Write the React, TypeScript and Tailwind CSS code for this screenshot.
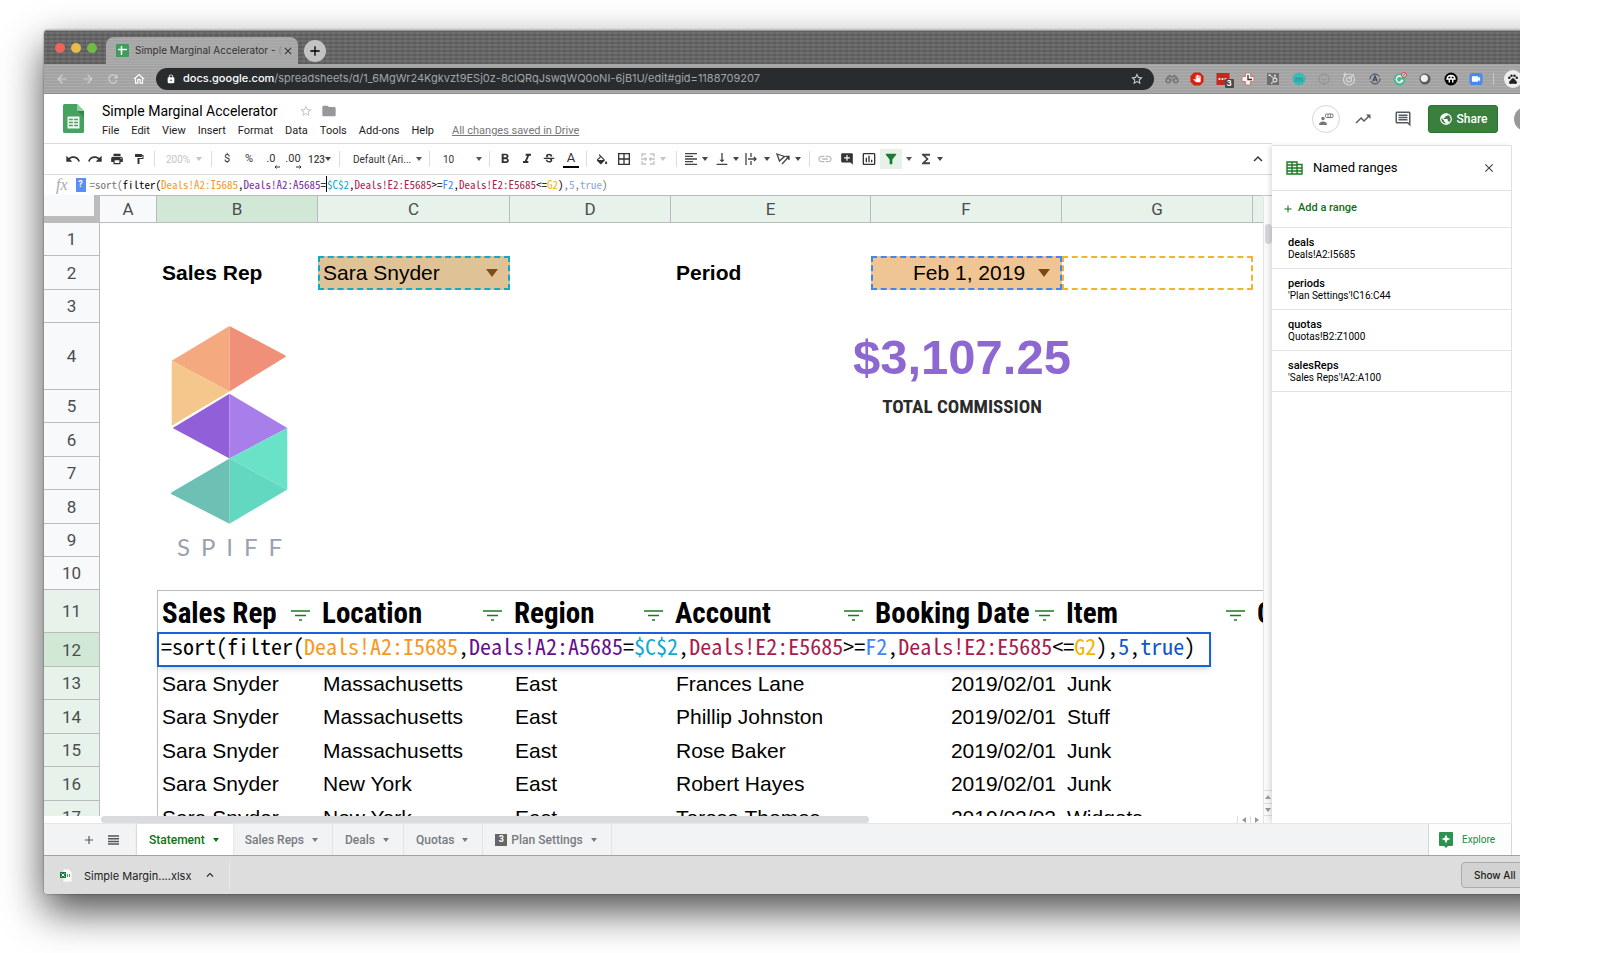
import React, {useState} from "react";
import {
    MdAddComment, MdArrowDropDown, MdBorderAll, MdFilterAlt, MdFolder, MdFormatAlignLeft, MdFormatBold,
    MdFormatItalic, MdFormatPaint, MdFunctions, MdInsertChartOutlined, MdOutlineInsertComment, MdLink,
    MdLock, MdOutlineHome, MdPrint, MdPublic, MdRedo, MdStarBorder, MdStrikethroughS, MdTrendingUp, MdUndo,
    MdVerticalAlignBottom, MdArrowBack, MdArrowForward, MdRefresh, MdClose, MdAdd, MdKeyboardArrowUp, MdPanTool,
    MdVideocam, MdPets,
} from "react-icons/md";
import {FaHubspot} from "react-icons/fa";

const MENU = ["File", "Edit", "View", "Insert", "Format", "Data", "Tools", "Add-ons", "Help"];

const FORMULA = [
    {text: "=sort(", cell: "text-black", bar: "text-[#777]"},
    {text: "filter(", cell: "text-black", bar: "text-black"},
    {text: "Deals!A2:I5685", cell: "text-[#f7981d]", bar: "text-[#f7981d]"},
    {text: ",", cell: "text-black", bar: "text-black"},
    {text: "Deals!A2:A5685", cell: "text-[#65108a]", bar: "text-[#7b2a9c]"},
    {text: "=", cell: "text-black", bar: "text-black border-r border-black"},
    {text: "$C$2", cell: "text-[#11a9cc]", bar: "text-[#11a9cc]"},
    {text: ",", cell: "text-black", bar: "text-black"},
    {text: "Deals!E2:E5685", cell: "text-[#a61d4c]", bar: "text-[#a61d4c]"},
    {text: ">=", cell: "text-black", bar: "text-black"},
    {text: "F2", cell: "text-[#4285f4]", bar: "text-[#4285f4]"},
    {text: ",", cell: "text-black", bar: "text-black"},
    {text: "Deals!E2:E5685", cell: "text-[#a61d4c]", bar: "text-[#a61d4c]"},
    {text: "<=", cell: "text-black", bar: "text-black"},
    {text: "G2", cell: "text-[#f4b400]", bar: "text-[#f4b400]"},
    {text: ")", cell: "text-black", bar: "text-black"},
    {text: ",", cell: "text-black", bar: "text-[#777]"},
    {text: "5", cell: "text-[#1155cc]", bar: "text-[#8ca6e0]"},
    {text: ",", cell: "text-black", bar: "text-[#777]"},
    {text: "true", cell: "text-[#1155cc]", bar: "text-[#8ca6e0]"},
    {text: ")", cell: "text-black", bar: "text-[#777]"},
];

const HEADERS = ["Sales Rep", "Location", "Region", "Account", "Booking Date", "Item"];

const DEALS = [
    {row: 13, height: "h-[33px]", rep: "Sara Snyder", location: "Massachusetts", region: "East", account: "Frances Lane", date: "2019/02/01", item: "Junk"},
    {row: 14, height: "h-[34px]", rep: "Sara Snyder", location: "Massachusetts", region: "East", account: "Phillip Johnston", date: "2019/02/01", item: "Stuff"},
    {row: 15, height: "h-[33px]", rep: "Sara Snyder", location: "Massachusetts", region: "East", account: "Rose Baker", date: "2019/02/01", item: "Junk"},
    {row: 16, height: "h-[34px]", rep: "Sara Snyder", location: "New York", region: "East", account: "Robert Hayes", date: "2019/02/01", item: "Junk"},
    {row: 17, height: "h-[33px]", rep: "Sara Snyder", location: "New York", region: "East", account: "Teresa Thomas", date: "2019/02/02", item: "Widgets"},
];

const RANGES = [
    {name: "deals", range: "Deals!A2:I5685"},
    {name: "periods", range: "'Plan Settings'!C16:C44"},
    {name: "quotas", range: "Quotas!B2:Z1000"},
    {name: "salesReps", range: "'Sales Reps'!A2:A100"},
];

const TABS = ["Statement", "Sales Reps", "Deals", "Quotas", "Plan Settings"];

const Caret: React.FC<{className?: string}> = ({className = "text-[#555]"}) => (
    <svg viewBox="0 0 6 4" className={`h-1 w-1.5 shrink-0 ${className}`}>
        <path d="M0 0h6L3 4z" fill="currentColor"/>
    </svg>
);

const Divider = () => <span className="mx-1 h-4 w-px shrink-0 bg-[#ddd]"/>;

interface ToolProps {
    label: string;
    className?: string;
    children: React.ReactNode;
}

const Tool: React.FC<ToolProps> = ({label, className = "w-[22px]", children}) => (
    <button aria-label={label} className={`flex h-5 shrink-0 items-center justify-center ${className}`}>
        {children}
    </button>
);

const DropTool: React.FC<ToolProps> = ({label, className = "text-[#444]", children}) => (
    <button aria-label={label} className={`flex h-5 w-[31px] shrink-0 items-center justify-between pr-1 pl-0.5 ${className}`}>
        {children}
        <Caret className={className}/>
    </button>
);

const TabStrip = () => (
    <div className="flex h-[34px] shrink-0 items-end bg-[#696969] bg-[repeating-linear-gradient(0deg,#0000001f_0_2px,transparent_2px_4px),repeating-linear-gradient(90deg,#ffffff0c_0_3px,transparent_3px_6px)] pl-[11px] shadow-[inset_0_1px_0_#999]">
        <div className="flex h-8 items-center gap-1.5">
            <span className="size-2.5 rounded-full bg-[#f0635a]"/>
            <span className="size-2.5 rounded-full bg-[#e4bd4b]"/>
            <span className="size-2.5 rounded-full bg-[#70bb46]"/>
        </div>
        <div className="ml-[9px] flex h-[27px] w-[192px] items-center rounded-t-lg bg-[#a6a6a6] bg-[repeating-linear-gradient(0deg,#ffffff12_0_1px,transparent_1px_3px)] pr-[7px] pl-2.5">
            <svg viewBox="0 0 13 13" className="size-[13px] shrink-0">
                <rect width="13" height="13" rx="1" fill="#3f9c5a"/>
                <path d="M2 5.5h9M5.5 2v9" stroke="#fff" strokeWidth="1.5"/>
            </svg>
            <span className="ml-1.5 flex-1 whitespace-nowrap text-[10px] text-[#333]">
                Simple Marginal Accelerator - <span className="text-[#8c8c8c]">(</span>
            </span>
            <button aria-label="Close tab"><MdClose className="size-3 text-[#333]"/></button>
        </div>
        <button aria-label="New tab" className="mb-0.5 ml-1.5 flex size-[22px] items-center justify-center rounded-full bg-[#c3c3c3]">
            <MdAdd className="size-4 text-black"/>
        </button>
    </div>
);

const Extensions = () => (
    <div className="ml-2.5 flex w-[358px] shrink-0 items-center justify-between">
        <svg viewBox="0 0 16 16" className="size-4" fill="none" stroke="#777" strokeWidth="1.6">
            <circle cx="4.2" cy="9.500" r="2.1"/><circle cx="11.8" cy="9.500" r="2.1"/>
            <path d="M6.4 9h3.2M3 7l2.500-2.500L7.500 6h1l2-1.500L13 7"/>
        </svg>
        <svg viewBox="0 0 16 16" className="size-4">
            <path d="M5 1.5h6L14.5 5v6L11 14.5H5L1.5 11V5z" fill="#d8200f"/>
            <MdPanTool x="4" y="3.5" size="8" color="#fff"/>
        </svg>
        <span className="relative size-4">
            <svg viewBox="0 0 16 16" className="size-4">
                <path d="M1.500 2h13v12h-13z" fill="#c5281f"/>
                <circle cx="4.500" cy="8" r="1.100" fill="#fff"/><circle cx="7.500" cy="8" r="1.100" fill="#fff"/><circle cx="10.500" cy="8" r="1.100" fill="#fff"/>
            </svg>
            <span className="absolute top-2 left-2.5 flex size-[9px] items-center justify-center rounded-[1px] bg-[#4a4a4a] text-[8px] leading-none font-bold text-white">3</span>
        </span>
        <svg viewBox="0 0 16 16" className="size-4">
            <path d="M5.5 2h5v3.5H14v5h-3.500V14h-5v-3.500H2v-5h3.500z" fill="#f4f4f4" stroke="#d87878"/>
            <path d="M8 4v4.500h4" stroke="#333" strokeWidth="1.300" fill="none"/>
        </svg>
        <svg viewBox="0 0 16 16" className="size-4">
            <path d="M2 2h12v12H2z" fill="#6e6e6e"/>
            <FaHubspot x="3" y="3" size="10" color="#e4e4e4"/>
        </svg>
        <svg viewBox="0 0 16 16" className="size-4">
            <circle cx="8" cy="8" r="6.500" fill="#3fb7b4"/>
            <path d="M5 11V6.500M5 8q1.500-2.500 3 0v3M8 8q1.500-2.500 3 0v3" stroke="#1d8f96" fill="none"/>
        </svg>
        <svg viewBox="0 0 16 16" className="size-4" fill="none" stroke="#8f8f8f">
            <circle cx="8" cy="8" r="5"/><path d="M5.500 7.500L8 9.500l2.500-2"/>
        </svg>
        <svg viewBox="0 0 16 16" className="size-4" fill="none" stroke="#d6d6d6" strokeWidth="1.200">
            <circle cx="8" cy="8.500" r="5.500"/><circle cx="8" cy="8.500" r="2.500"/><path d="M2 3.500h4M4 1.500v4M8 8l5-5"/>
        </svg>
        <svg viewBox="0 0 16 16" className="size-4" fill="none" stroke="#39465e">
            <circle cx="8" cy="8" r="5" strokeDasharray="13 2"/><path d="M5.800 10.500L8 5l2.200 5.500M6.700 9h2.600" strokeWidth="1.200"/>
        </svg>
        <svg viewBox="0 0 16 16" className="size-4" fill="none">
            <circle cx="7.500" cy="8.500" r="6" fill="#44bd92"/>
            <path d="M10 6.200A3.200 3.200 0 1 0 10.500 9.500H8.500" stroke="#fff" strokeWidth="1.400"/>
            <circle cx="12" cy="4" r="2.600" fill="#c9c9c9" stroke="#d8505c"/><path d="M10.200 5.800l3.600-3.600" stroke="#d8505c"/>
        </svg>
        <svg viewBox="0 0 16 16" className="size-4">
            <circle cx="8" cy="8" r="5.500" fill="#5a5a5a"/><circle cx="7.300" cy="7.300" r="3.600" fill="#f2f2f2"/>
        </svg>
        <svg viewBox="0 0 16 16" className="size-4">
            <circle cx="8" cy="8" r="6.500" fill="#000"/>
            <path d="M4 8q.5-3.500 4-3.500T12 8zM6.300 8v3.500M9.700 8v3.500M8 4.500V8" stroke="#fff" strokeWidth="1.400" fill="none"/>
        </svg>
        <svg viewBox="0 0 16 16" className="size-4">
            <rect x="1.500" y="2" width="13" height="12" rx="3" fill="#4a85f0"/>
            <MdVideocam x="2.500" y="2.500" size="11" color="#fff"/>
        </svg>
        <span className="h-3 w-px bg-[#c8c8c8]"/>
        <span className="flex size-[18px] items-center justify-center rounded-full bg-[#eee]">
            <MdPets className="size-3 text-[#222]"/>
        </span>
    </div>
);

const AddressBar = () => (
    <div className="flex h-[30px] shrink-0 items-center border-b border-[#8b8b8b] bg-[#a3a3a3] bg-[repeating-linear-gradient(0deg,#ffffff1a_0_1px,transparent_1px_3px)] pr-[46px] pl-[11px]">
        <div className="flex w-[101px] items-center justify-between pr-2.5 text-[#cfcfcf]">
            <button aria-label="Back"><MdArrowBack className="size-3.5"/></button>
            <button aria-label="Forward"><MdArrowForward className="size-3.5"/></button>
            <button aria-label="Reload"><MdRefresh className="size-3.5"/></button>
            <button aria-label="Home"><MdOutlineHome className="size-3.5 text-white"/></button>
        </div>
        <div className="flex h-[22px] min-w-0 flex-1 items-center rounded-full bg-[#292c2f] px-2.5">
            <MdLock className="size-2.5 shrink-0 text-white"/>
            <a href="#sheet" className="ml-[7px] flex-1 truncate text-[11px] text-[#a2a4a7]">
                <span className="font-medium text-white">docs.google.com</span>/spreadsheets/d/1_6MgWr24Kgkvzt9ESj0z-8clQRqJswqWQ0oNI-6jB1U/edit#gid=1188709207
            </a>
            <button aria-label="Bookmark"><MdStarBorder className="size-3.5 text-[#d8d8d8]"/></button>
        </div>
        <Extensions/>
    </div>
);

const DocHeader = () => (
    <header className="flex h-[49px] shrink-0 items-center pr-[30px] pl-[19px]">
        <svg viewBox="0 0 21 29" className="h-[29px] w-[21px] shrink-0">
            <path d="M1.500 0H14l7 7v20.500a1.500 1.500 0 0 1-1.500 1.500h-18A1.500 1.500 0 0 1 0 27.500v-26A1.500 1.500 0 0 1 1.500 0z" fill="#45a25f"/>
            <path d="M14 0l7 7h-7z" fill="#8fd0a5"/>
            <path d="M14 7h7v6z" fill="#37864e"/>
            <path d="M4.500 12.500h12v12h-12z" fill="#f4f8f5"/>
            <path d="M6 15.500h9M6 18.500h9M6 21.500h9" stroke="#45a25f" strokeWidth="1.600"/>
            <path d="M10.500 13v11" stroke="#f4f8f5" strokeWidth="1.200"/>
        </svg>
        <div className="mt-[5px] ml-[18px]">
            <div className="flex h-5 items-center">
                <h1 className="text-[14px] leading-5 text-black">Simple Marginal Accelerator</h1>
                <button aria-label="Star" className="ml-[22px]"><MdStarBorder className="size-3.5 text-[#c6c6c6]"/></button>
                <button aria-label="Move to folder" className="ml-2"><MdFolder className="size-4 text-[#97979c]"/></button>
            </div>
            <nav className="flex h-5 items-center gap-3 text-[11px] text-[#1c1c1c]">
                {MENU.map(item => <button key={item}>{item}</button>)}
                <a href="#history" className="ml-1.5 text-[#777] underline">All changes saved in Drive</a>
            </nav>
        </div>
        <div className="ml-auto flex shrink-0 items-center">
            <button aria-label="Meet" className="flex size-7 items-center justify-center rounded-full border border-[#d5d7da]">
                <svg viewBox="0 0 16 14" className="h-3.5 w-4">
                    <circle cx="5" cy="6.500" r="1.700" fill="#777"/>
                    <path d="M1 13q0-3.500 4-3.500T9 13z" fill="#777"/>
                    <rect x="7.500" y="2" width="7.500" height="3.500" rx="1" fill="none" stroke="#777"/>
                    <path d="M10 2v3.500M12.500 2v3.500" stroke="#777" strokeWidth=".8"/>
                </svg>
            </button>
            <button aria-label="Activity" className="ml-3.5"><MdTrendingUp className="size-[18px] text-[#555a60]"/></button>
            <button aria-label="Comments" className="ml-[22px]"><MdOutlineInsertComment className="size-[18px] text-[#555a60]"/></button>
            <button className="ml-4 flex h-7 w-[70px] items-center justify-center gap-1 rounded-[3px] border border-[#2a7430] bg-[#3b7f3f] text-[12px] font-medium text-white">
                <MdPublic className="size-3.5"/>Share
            </button>
            <span className="ml-4 size-6 rounded-full bg-[#999]"/>
        </div>
    </header>
);

const Toolbar = () => (
    <div className="flex h-8 shrink-0 items-center border-y border-[#dcdcdc] pl-[18px] text-[11px] text-[#333]">
        <Tool label="Undo"><MdUndo className="size-4"/></Tool>
        <Tool label="Redo"><MdRedo className="size-4"/></Tool>
        <Tool label="Print"><MdPrint className="size-3.5"/></Tool>
        <Tool label="Paint format"><MdFormatPaint className="size-3"/></Tool>
        <Divider/>
        <label className="flex w-12 shrink-0 items-center justify-between pr-[5px] pl-[7px] text-[#c4c4c4]">
            <select aria-label="Zoom" className="w-7 appearance-none text-[10px] outline-none"><option>200%</option></select>
            <Caret className="text-[#c4c4c4]"/>
        </label>
        <Divider/>
        <Tool label="Currency">$</Tool>
        <Tool label="Percent">%</Tool>
        <Tool label="Decrease decimals" className="relative w-[22px]">
            .0<svg viewBox="0 0 6 4" className="absolute right-0.5 bottom-0 h-1 w-1.5"><path d="M6 2H1M2.500.5L1 2l1.500 1.500" stroke="#333" fill="none"/></svg>
        </Tool>
        <Tool label="Increase decimals" className="relative w-[22px]">
            .00<svg viewBox="0 0 6 4" className="absolute right-0.5 bottom-0 h-1 w-1.5"><path d="M0 2h5M3.500.5L5 2 3.500 3.500" stroke="#333" fill="none"/></svg>
        </Tool>
        <DropTool label="More formats"><span className="pl-0.5 text-[10px] font-medium">123</span></DropTool>
        <Divider/>
        <label className="flex w-[81px] shrink-0 items-center justify-between pr-[3px] pl-[9px]">
            <select aria-label="Font" className="w-[60px] appearance-none text-[10px] outline-none"><option>Default (Ari...</option></select>
            <Caret/>
        </label>
        <Divider/>
        <label className="flex w-[51px] shrink-0 items-center justify-between pr-[3px] pl-[9px]">
            <select aria-label="Font size" className="w-5 appearance-none text-[10px] outline-none"><option>10</option></select>
            <Caret/>
        </label>
        <Divider/>
        <Tool label="Bold"><MdFormatBold className="size-4"/></Tool>
        <Tool label="Italic"><MdFormatItalic className="size-4"/></Tool>
        <Tool label="Strikethrough"><MdStrikethroughS className="size-3.5"/></Tool>
        <Tool label="Text color">
            <span className="w-4 border-b-2 border-black text-center text-[13px] leading-4">A</span>
        </Tool>
        <Divider/>
        <Tool label="Fill color">
            <svg viewBox="0 0 24 18" className="h-[11px] w-3.5" fill="currentColor">
                <path d="M16.560 8.940L7.620 0 6.210 1.410l2.380 2.380-5.150 5.150c-.59.59-.59 1.540 0 2.120l5.500 5.500c.29.29.68.44 1.060.44s.77-.15 1.060-.44l5.500-5.500c.59-.58.59-1.530 0-2.120zM5.210 10L10 5.210 14.790 10H5.210zM19 11.500s-2 2.170-2 3.500c0 1.100.9 2 2 2s2-.9 2-2c0-1.330-2-3.500-2-3.500z"/>
            </svg>
        </Tool>
        <Tool label="Borders"><MdBorderAll className="size-4"/></Tool>
        <span className="mr-0.5 ml-1 flex">
            <DropTool label="Merge cells" className="text-[#c4c4c4]">
                <svg viewBox="0 0 14 12" className="h-3 w-3.5" fill="none" stroke="currentColor" strokeWidth="1.300">
                    <path d="M5 1H1v3M9 1h4v3M5 11H1V8M9 11h4V8M0 6h5.500M14 6H8.500M4 4.500L5.500 6 4 7.500M10 4.500L8.500 6 10 7.500"/>
                </svg>
            </DropTool>
        </span>
        <Divider/>
        <DropTool label="Horizontal align"><MdFormatAlignLeft className="size-4"/></DropTool>
        <DropTool label="Vertical align"><MdVerticalAlignBottom className="size-4"/></DropTool>
        <DropTool label="Text wrapping">
            <svg viewBox="0 0 12 12" className="size-3" fill="none" stroke="currentColor" strokeWidth="1.300">
                <path d="M1 0v12M6 0v4M6 8v4M3 6h8M9 4l2 2-2 2"/>
            </svg>
        </DropTool>
        <DropTool label="Text rotation">
            <svg viewBox="0 0 14 12" className="h-3 w-3.5" fill="none" stroke="currentColor" strokeWidth="1.300">
                <path d="M1 1l7.500 2.500-5 4.500zM6 11l6.500-7M9.500 3.500H13V7"/>
            </svg>
        </DropTool>
        <Divider/>
        <Tool label="Insert link"><MdLink className="size-4 text-[#b9b9b9]"/></Tool>
        <Tool label="Insert comment"><MdAddComment className="size-3.5"/></Tool>
        <Tool label="Insert chart"><MdInsertChartOutlined className="size-4"/></Tool>
        <Tool label="Filter" className="w-[22px] bg-[#e6f2e9]"><MdFilterAlt className="size-4 text-[#1a7a32]"/></Tool>
        <Tool label="Filter views" className="w-3.5"><Caret/></Tool>
        <DropTool label="Functions"><MdFunctions className="size-4"/></DropTool>
        <Tool label="Hide menus" className="mr-[3px] ml-auto w-[22px]"><MdKeyboardArrowUp className="size-[18px]"/></Tool>
    </div>
);

const FormulaBar = () => (
    <div className="flex h-5 shrink-0 items-center pl-3">
        <span className="font-['Liberation_Serif',serif] text-[16px] leading-5 text-[#aaa] italic">fx</span>
        <span className="ml-2 flex h-3.5 w-2.5 items-center justify-center bg-[#5a8df5] text-[9px] font-bold text-white">?</span>
        <div role="textbox" aria-label="Formula bar" className="ml-1 whitespace-nowrap pb-0.5 font-['Noto_Sans_Mono_CJK_JP','Liberation_Mono',monospace] text-[11px] leading-4">
            {FORMULA.map((part, index) => <span key={index} className={part.bar}>{part.text}</span>)}
        </div>
    </div>
);

const RowHead: React.FC<{row: number, tone?: string}> = ({row, tone = "bg-[#f8f9fa]"}) => (
    <th scope="row" className={`border-r border-b border-[#b9bbbd] p-0 text-center font-['Roboto',sans-serif] text-[17px] leading-5 font-normal text-[#4a4d50] ${tone}`}>
        {row}
    </th>
);

const FilterButton = () => (
    <button aria-label="Filter column" className="mt-1 shrink-0">
        <svg viewBox="0 0 19 11" className="h-[11px] w-[19px]" stroke="#1a7a1f" strokeWidth="1.300">
            <path d="M0 1h19M4 5.500h11M8 10h3"/>
        </svg>
    </button>
);

const SpiffLogo = () => (
    <div className="absolute top-0.5 left-3.5 w-[117px]">
        <svg viewBox="0 0 352 600" className="h-[200px] w-[117px]">
            <path d="M176 2L2 107l174 92z" fill="#f4a97f"/>
            <path d="M176 2l167 88q4 3 0 6L176 199z" fill="#f09078"/>
            <path d="M2 107l174 92L2 302z" fill="#f6c78c"/>
            <path d="M176 206L5 309l171 92z" fill="#9160d8"/>
            <path d="M176 206l174 103-174 92z" fill="#a87eeb"/>
            <path d="M350 309v185l-174-93z" fill="#69e2c8"/>
            <path d="M350 494L176 597V401z" fill="#63d8c0"/>
            <path d="M176 401v196L2 508q-4-3 0-6z" fill="#6cc1b4"/>
        </svg>
        <div className="mt-2 flex h-7 items-center justify-between px-1.5 font-['Lato',sans-serif] text-[24px] text-[#9aa1b0]">
            <span>S</span><span>P</span><span>I</span><span>F</span><span>F</span>
        </div>
    </div>
);

const Sheet = () => {
    const [rep, setRep] = useState("Sara Snyder");
    const [period, setPeriod] = useState("Feb 1, 2019");

    return (
        <div className="flex min-h-0 flex-1">
            <div className="flex min-w-0 flex-1 flex-col border-r border-[#e3e3e3]">
                <div className="min-h-0 flex-1 overflow-hidden">
                    <table className="w-[1366px] table-fixed border-separate border-spacing-0 font-['Liberation_Sans',Arial,sans-serif] text-[21px] leading-6 text-black">
                        <colgroup>
                            <col className="w-14"/>
                            <col className="w-[57px]"/>
                            <col className="w-[161px]"/>
                            <col className="w-[192px]"/>
                            <col className="w-[161px]"/>
                            <col className="w-[200px]"/>
                            <col className="w-[191px]"/>
                            <col className="w-[191px]"/>
                            <col/>
                        </colgroup>
                        <thead>
                            <tr className="h-7 font-['Roboto',sans-serif] text-[17px] text-[#4a4d50] [&>th]:border-t [&>th]:border-r [&>th]:border-b [&>th]:border-[#b9bbbd] [&>th]:p-0 [&>th]:font-normal">
                                <td className="border-r-[6px] border-b-[7px] border-[#bcbcbc] bg-[#f8f9fa] p-0"/>
                                <th className="bg-[#f8f9fa]">A</th>
                                <th className="bg-[#d1e8d7]">B</th>
                                <th className="bg-[#e7f2ea]">C</th>
                                <th className="bg-[#e7f2ea]">D</th>
                                <th className="bg-[#e7f2ea]">E</th>
                                <th className="bg-[#e7f2ea]">F</th>
                                <th className="bg-[#e7f2ea]">G</th>
                                <th className="bg-[#e7f2ea]"/>
                            </tr>
                        </thead>
                        <tbody className="[&_td]:p-0">
                            <tr className="h-[33px]"><RowHead row={1}/><td colSpan={8}/></tr>
                            <tr className="h-[34px]">
                                <RowHead row={2}/>
                                <td/>
                                <td><div className="pl-[5px] font-bold">Sales Rep</div></td>
                                <td>
                                    <label className="flex h-[34px] items-center border-2 border-dashed border-[#11a9cc] bg-[#dfc397] pr-2.5 pl-[3px]">
                                        <select aria-label="Sales rep" value={rep} onChange={e => setRep(e.target.value)} className="flex-1 appearance-none outline-none">
                                            <option>Sara Snyder</option>
                                        </select>
                                        <Caret className="h-2! w-3! text-[#7a4f1a]"/>
                                    </label>
                                </td>
                                <td/>
                                <td><div className="pl-[5px] font-bold">Period</div></td>
                                <td>
                                    <label className="flex h-[34px] items-center border-2 border-dashed border-[#4285f4] bg-[#f0c594] pr-2.5 pl-10">
                                        <select aria-label="Period" value={period} onChange={e => setPeriod(e.target.value)} className="flex-1 appearance-none outline-none">
                                            <option>Feb 1, 2019</option>
                                        </select>
                                        <Caret className="h-2! w-3! text-[#7a4710]"/>
                                    </label>
                                </td>
                                <td><div className="h-[34px] border-2 border-dashed border-[#f4b42a]"/></td>
                                <td/>
                            </tr>
                            <tr className="h-[33px]"><RowHead row={3}/><td colSpan={8}/></tr>
                            <tr className="h-[67px]">
                                <RowHead row={4}/>
                                <td/>
                                <td className="relative align-top"><SpiffLogo/></td>
                                <td colSpan={2}/>
                                <td colSpan={3} className="text-center text-[49px] leading-[60px] font-bold text-[#8d68d0]">$3,107.25</td>
                                <td/>
                            </tr>
                            <tr className="h-[33px]">
                                <RowHead row={5}/>
                                <td colSpan={4}/>
                                <td colSpan={3} className="text-center font-['Liberation_Sans_Narrow','Roboto_Condensed','Open_Sans_Condensed',sans-serif] text-[19px] font-bold text-[#2b2b2b]">TOTAL COMMISSION</td>
                                <td/>
                            </tr>
                            <tr className="h-[34px]"><RowHead row={6}/><td colSpan={8}/></tr>
                            <tr className="h-[33px]"><RowHead row={7}/><td colSpan={8}/></tr>
                            <tr className="h-[34px]"><RowHead row={8}/><td colSpan={8}/></tr>
                            <tr className="h-[33px]"><RowHead row={9}/><td colSpan={8}/></tr>
                            <tr className="h-[33px]"><RowHead row={10}/><td colSpan={8}/></tr>
                            <tr className="h-[43px] font-['Liberation_Sans_Narrow','Roboto_Condensed','Open_Sans_Condensed',sans-serif] text-[29px] leading-8 font-bold">
                                <RowHead row={11} tone="bg-[#e7f2ea]"/>
                                <td/>
                                {HEADERS.map((header, index) => (
                                    <td key={header} className={index === 0 ? "border-t border-l border-[#b3c3b3]" : "border-t border-[#b3c3b3]"}>
                                        <div className="flex items-center justify-between pt-0.5 pr-2 pl-1 whitespace-nowrap">{header}<FilterButton/></div>
                                    </td>
                                ))}
                                <td className="border-t border-[#b3c3b3]"><div className="pt-0.5 pl-1">C</div></td>
                            </tr>
                            <tr className="h-[34px]">
                                <RowHead row={12} tone="bg-[#d1e8d7]"/>
                                <td/>
                                <td className="relative border-l border-[#b3c3b3]">
                                    <div role="textbox" aria-label="Cell B12" className="absolute top-[-1px] left-[-1px] z-10 flex h-[35px] items-start border-2 border-[#1a62dd] bg-white pr-3.5 pl-0.5 whitespace-nowrap shadow-md font-['Noto_Sans_Mono_CJK_JP','Liberation_Mono',monospace] text-[22px] leading-[22px]">
                                        {FORMULA.map((part, index) => <span key={index} className={part.cell}>{part.text}</span>)}
                                    </div>
                                </td>
                                <td colSpan={6}/>
                            </tr>
                            {DEALS.map(deal => (
                                <tr key={deal.row} className={deal.height}>
                                    <RowHead row={deal.row} tone="bg-[#e7f2ea]"/>
                                    <td/>
                                    <td className="border-l border-[#b3c3b3]"><div className="pl-1">{deal.rep}</div></td>
                                    <td><div className="pl-[5px]">{deal.location}</div></td>
                                    <td><div className="pl-[5px]">{deal.region}</div></td>
                                    <td><div className="pl-[5px]">{deal.account}</div></td>
                                    <td><div className="pr-1.5 text-right">{deal.date}</div></td>
                                    <td><div className="pl-[5px]">{deal.item}</div></td>
                                    <td/>
                                </tr>
                            ))}
                        </tbody>
                    </table>
                </div>
                <div className="flex h-[7px] shrink-0 pl-14">
                    <span className="ml-px h-[7px] w-[66%] rounded-full bg-[#d9dbde]"/>
                    <span className="ml-auto flex text-[#999]">
                        <button aria-label="Scroll left" className="flex w-[13px] items-center justify-center border-l border-[#ddd]"><Caret className="rotate-90 text-[#999]"/></button>
                        <button aria-label="Scroll right" className="flex w-[13px] items-center justify-center border-l border-[#ddd]"><Caret className="-rotate-90 text-[#999]"/></button>
                    </span>
                </div>
            </div>
            <div className="flex w-2 shrink-0 flex-col items-center border-t border-[#c6c6c6] bg-[#fafafa]">
                <span className="mt-7 h-5 w-[7px] rounded-full bg-[#d5d7da]"/>
                <button aria-label="Scroll up" className="mt-auto flex h-[13px] w-full items-center justify-center border-t border-[#ddd]"><Caret className="rotate-180 text-[#999]"/></button>
                <button aria-label="Scroll down" className="mb-[7px] flex h-[13px] w-full items-center justify-center border-y border-[#ddd]"><Caret className="text-[#999]"/></button>
            </div>
        </div>
    );
};

const NamedRanges = () => (
    <aside className="mt-0.5 mr-2 w-[240px] shrink-0 border-t border-r border-[#dfe0e3] bg-white shadow-[-3px_0_5px_-1px_#00000022]">
        <div className="flex h-[45px] items-center border-b border-[#dfe0e3] pr-[15px] pl-3.5">
            <svg viewBox="0 0 17 14" className="h-3.5 w-[17px]" fill="none" stroke="#1a7a22" strokeWidth="1.400">
                <path d="M1 1h10v2.500h5V13H1zM1 4h10M1 7h15M1 10h15M6 1v12M11 3v10"/>
            </svg>
            <h2 className="ml-2.5 text-[13px] text-black">Named ranges</h2>
            <button aria-label="Close" className="ml-auto"><MdClose className="size-3.5 text-[#444]"/></button>
        </div>
        <button className="flex h-[37px] w-full items-center gap-1 border-b border-[#e3e4e6] pb-px pl-2.5 text-[11px] font-medium text-[#136c1b]">
            <MdAdd className="size-3"/>Add a range
        </button>
        <ul>
            {RANGES.map(range => (
                <li key={range.name} className="flex h-[41px] flex-col justify-center border-b border-[#e3e4e6] pt-px pl-4 text-[10px] leading-3 text-black">
                    <span className="text-[11px] font-medium">{range.name}</span>
                    <span>{range.range}</span>
                </li>
            ))}
        </ul>
    </aside>
);

const SheetTabs = () => {
    const [active, setActive] = useState("Statement");

    return (
        <div className="mr-14 flex h-8 shrink-0 items-stretch border-t border-[#e4e6e8] bg-[#f1f3f4] text-[12px] font-medium">
            <div className="flex w-[93px] items-center gap-3 border-r border-[#e2e4e6] pl-[38px] text-[#555]">
                <button aria-label="Add sheet"><MdAdd className="size-3.5"/></button>
                <button aria-label="All sheets">
                    <svg viewBox="0 0 11 10" className="h-2.5 w-[11px]" stroke="currentColor" strokeWidth="1.500"><path d="M0 1h11M0 3.700h11M0 6.400h11M0 9h11"/></svg>
                </button>
            </div>
            {TABS.map(tab => (
                <button
                    key={tab}
                    onClick={() => setActive(tab)}
                    className={active === tab
                        ? "flex items-center gap-2 bg-white pr-3.5 pl-3 text-[#0d7216] shadow-sm"
                        : "flex items-center gap-2 border-r border-[#e2e4e6] pr-3.5 pl-3 text-[#777b80]"}
                >
                    {tab === "Plan Settings" &&
                        <span className="-mr-1 flex size-3 items-center justify-center bg-[#666] text-[9px] font-bold text-white">3</span>}
                    {tab}
                    <Caret className={active === tab ? "text-[#0d7216]" : "text-[#777b80]"}/>
                </button>
            ))}
            <button className="ml-auto flex w-[84px] items-center justify-between border-x border-[#d5d7da] bg-[#fbfefc] pr-4 pl-2.5 text-[10px] font-normal text-[#1e8744]">
                <svg viewBox="0 0 14 16" className="h-4 w-3.5">
                    <path d="M1 0h12a1 1 0 0 1 1 1v12a1 1 0 0 1-1 1H9l-2 2-2-2H1a1 1 0 0 1-1-1V1a1 1 0 0 1 1-1z" fill="#2f9150"/>
                    <path d="M7 2.500l1.300 3.200L11.500 7 8.300 8.300 7 11.500 5.700 8.300 2.500 7l3.200-1.300z" fill="#fff"/>
                </svg>
                Explore
            </button>
        </div>
    );
};

const DownloadBar = () => (
    <div className="flex h-[39px] shrink-0 items-center rounded-b border-t border-[#a2a2a2] bg-[#ddd] pr-8 font-['Inter',sans-serif] text-[11px] text-[#1c1c1c]">
        <div className="flex h-7 items-center border-r border-[#e8e8e8] pr-3 pl-4">
            <svg viewBox="0 0 12 13" className="h-[13px] w-3">
                <path d="M3 0h6l3 3v10H3z" fill="#fafafa" stroke="#ccc" strokeWidth=".5"/>
                <path d="M0 3h6v6H0z" fill="#1d7a3e"/>
                <path d="M1.500 4.500l3 3M4.500 4.500l-3 3" stroke="#fff"/>
                <path d="M7.500 5v3M9.500 5v3" stroke="#3f9c5a"/>
            </svg>
            <span className="mt-0.5 ml-3">Simple Margin....xlsx</span>
            <button aria-label="Download options" className="ml-3"><MdKeyboardArrowUp className="size-3.5"/></button>
        </div>
        <button className="ml-auto h-[26px] w-[75px] rounded border border-[#aaa] bg-[#d2d2d2] pl-3 text-left text-[10px] font-medium">Show All</button>
    </div>
);

const App: React.FC = () => {
    return (
        <div className="h-screen bg-white font-['Roboto',sans-serif]">
            <div className="mr-20 h-full overflow-hidden pt-[30px] pb-[59px] pl-11">
                <div className="-mr-12 flex h-full flex-col rounded bg-white shadow-[0_17px_40px_rgba(0,0,0,0.7),0_0_2px_rgba(0,0,0,0.5)]">
                    <div className="flex shrink-0 flex-col overflow-hidden rounded-t font-['Inter',sans-serif]">
                        <TabStrip/>
                        <AddressBar/>
                    </div>
                    <DocHeader/>
                    <div className="mr-12 flex min-h-0 flex-1">
                        <main className="flex min-w-0 flex-1 flex-col">
                            <Toolbar/>
                            <FormulaBar/>
                            <Sheet/>
                        </main>
                        <NamedRanges/>
                    </div>
                    <SheetTabs/>
                    <DownloadBar/>
                </div>
            </div>
        </div>
    );
};

export default App;
